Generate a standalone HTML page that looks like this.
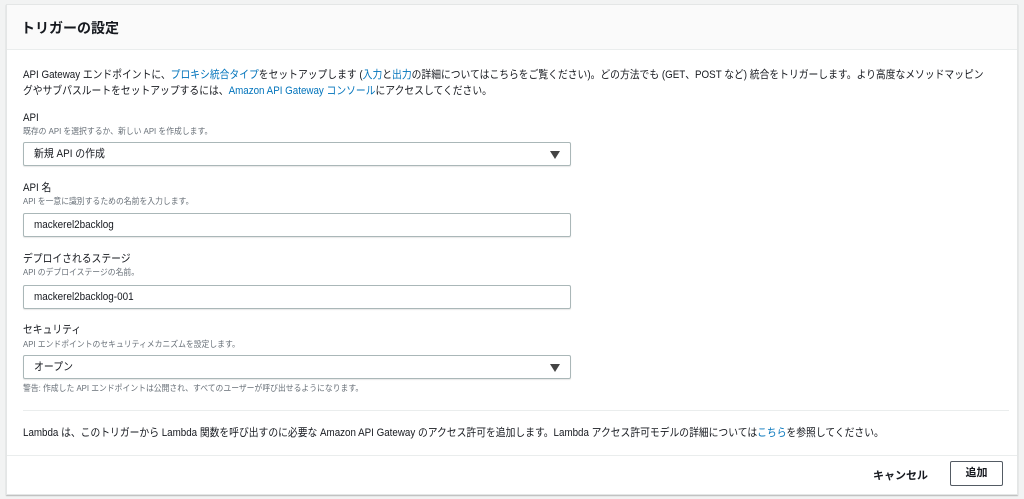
<!DOCTYPE html>
<html><head><meta charset="utf-8"><style>
*{box-sizing:border-box;margin:0;padding:0}
body{width:1024px;height:499px;background:#f2f3f3;font-family:"Liberation Sans","Noto Sans CJK JP",sans-serif;color:#16191f;position:relative;overflow:hidden}
.panel{position:absolute;left:6px;top:4px;width:1012px;height:491px;background:#fff;border:1px solid #e4e6e6;box-shadow:0 1px 1px rgba(0,0,0,.25);overflow:hidden}
.hdr{height:45px;background:#fafafa;border-bottom:1px solid #eaeded;padding:13px 14px;font-size:14px;font-weight:bold}
.a{position:absolute;left:16px;font-size:11px;line-height:14px;white-space:nowrap;transform:scaleX(0.89);transform-origin:0 0}
.s{position:absolute;left:16px;font-size:8.5px;line-height:11px;color:#687078;white-space:nowrap;transform:scaleX(0.92);transform-origin:0 0}
a{color:#0073bb;text-decoration:none}
.box{position:absolute;left:16px;width:548px;height:24px;border:1px solid #aab7b8;border-radius:2px;font-size:11px;line-height:22px;padding:0 10px;box-shadow:0 1px 1px rgba(0,0,0,.1)}
.box span{display:inline-block;transform:scaleX(0.9);transform-origin:0 0}
.tri{position:absolute;right:10px;top:8px;width:0;height:0;border-left:5px solid transparent;border-right:5px solid transparent;border-top:8px solid #444}
.div{position:absolute;left:16px;right:8px;top:405px;border-top:1px solid #eaeded}
.ftr{position:absolute;left:0;right:0;top:450px;bottom:0;border-top:1px solid #eaeded}
</style></head><body>
<div class="panel">
<div class="hdr">トリガーの設定</div>
<div class="a" style="top:63px">API Gateway エンドポイントに、<a>プロキシ統合タイプ</a>をセットアップします (<a>入力</a>と<a>出力</a>の詳細についてはこちらをご覧ください)。どの方法でも (GET、POST など) 統合をトリガーします。より高度なメソッドマッピン</div>
<div class="a" style="top:79px">グやサブパスルートをセットアップするには、<a>Amazon API Gateway コンソール</a>にアクセスしてください。</div>
<div class="a" style="top:106px">API</div>
<div class="s" style="top:121px">既存の API を選択するか、新しい API を作成します。</div>
<div class="box" style="top:137px"><span>新規 API の作成</span><div class="tri"></div></div>
<div class="a" style="top:176px">API 名</div>
<div class="s" style="top:191px">API を一意に識別するための名前を入力します。</div>
<div class="box" style="top:208px"><span>mackerel2backlog</span></div>
<div class="a" style="top:247px">デプロイされるステージ</div>
<div class="s" style="top:262px">API のデプロイステージの名前。</div>
<div class="box" style="top:280px"><span>mackerel2backlog-001</span></div>
<div class="a" style="top:318px">セキュリティ</div>
<div class="s" style="top:334px">API エンドポイントのセキュリティメカニズムを設定します。</div>
<div class="box" style="top:350px"><span>オープン</span><div class="tri"></div></div>
<div class="s" style="top:378px">警告: 作成した API エンドポイントは公開され、すべてのユーザーが呼び出せるようになります。</div>
<div class="div"></div>
<div class="a" style="top:421px">Lambda は、このトリガーから Lambda 関数を呼び出すのに必要な Amazon API Gateway のアクセス許可を追加します。Lambda アクセス許可モデルの詳細については<a>こちら</a>を参照してください。</div>
<div class="ftr">
<div style="position:absolute;left:866px;top:11px;font-size:11px;font-weight:bold">キャンセル</div>
<div style="position:absolute;left:943px;top:5px;width:53px;height:25px;border:1px solid #545b64;border-radius:2px;font-size:11px;font-weight:bold;text-align:center;line-height:23px">追加</div>
</div>
</div>
</body></html>
